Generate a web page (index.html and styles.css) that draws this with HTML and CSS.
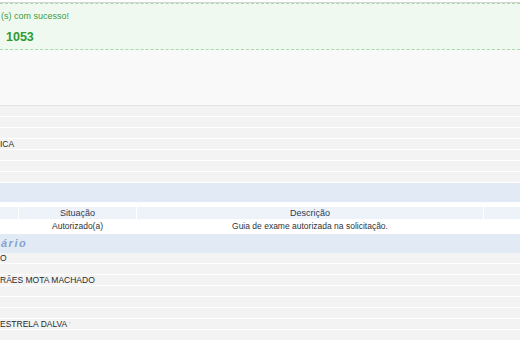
FILE: index.html
```html
<!DOCTYPE html>
<html>
<head>
<meta charset="utf-8">
<link rel="stylesheet" href="styles.css">
</head>
<body>
<div class="topbar"></div>
<div class="success">
  <div class="msg">(s) com sucesso!</div>
  <div class="num">1053</div>
</div>
<div class="blank"></div>
<div class="rows">
  <div class="row"></div>
  <div class="row"></div>
  <div class="row"></div>
  <div class="row">ICA</div>
  <div class="row"></div>
  <div class="row"></div>
  <div class="row"></div>
</div>
<div class="section"></div>
<div class="gap"></div>
<div class="thead">
  <div class="th"></div>
  <div class="th">Situação</div>
  <div class="th">Descrição</div>
  <div class="th"></div>
</div>
<div class="trow">
  <div class="td"></div>
  <div class="td">Autorizado(a)</div>
  <div class="td">Guia de exame autorizada na solicitação.</div>
  <div class="td"></div>
</div>
<div class="section title">ário</div>
<div class="rows">
  <div class="row">O</div>
  <div class="row"></div>
  <div class="row">RÃES MOTA MACHADO</div>
  <div class="row"></div>
  <div class="row"></div>
  <div class="row"></div>
  <div class="row">ESTRELA DALVA <span class="q">'</span></div>
  <div class="row"></div>
</div>
</body>
</html>
```

FILE: styles.css
```css
html, body {
  margin: 0;
  padding: 0;
  background: #fafafa;
  font-family: "Liberation Sans", Arial, sans-serif;
  overflow: hidden;
}
.topbar {
  height: 2px;
  background: #fdfdfd;
  border-bottom: 1px solid #d4d4d4;
}
.success {
  background: #eff9ef;
  border-top: 1px dashed #a9d9a9;
  border-bottom: 1px dashed #a9d9a9;
  height: 45px;
  padding-left: 1px;
}
.msg {
  margin-top: 6px;
  font-size: 9px;
  line-height: 12px;
  color: #3f9b3f;
}
.num {
  margin-top: 7px;
  padding-left: 5px;
  font-size: 12.5px;
  line-height: 16px;
  font-weight: bold;
  color: #2f9a2f;
}
.blank {
  height: 55px;
  background: #f9f9f9;
  border-bottom: 1px solid #e2e2e2;
}
.row {
  height: 10px;
  line-height: 10px;
  border-bottom: 1px solid #ffffff;
  background: #f3f3f3;
  font-size: 8.5px;
  color: #2a2a2a;
  white-space: nowrap;
}
.q {
  color: #999;
  font-size: 7px;
}
.section {
  height: 19px;
  background: #e2eaf6;
}
.gap {
  height: 5px;
  background: #ffffff;
}
.thead, .trow {
  display: grid;
  grid-template-columns: 18px 117px 346px 1fr;
  column-gap: 1px;
  background: #ffffff;
}
.thead {
  height: 12px;
}
.th {
  background: #eef3fa;
  font-size: 9px;
  line-height: 12px;
  text-align: center;
  color: #2c3a55;
}
.trow {
  height: 15px;
}
.td {
  background: #ffffff;
  font-size: 8.5px;
  line-height: 14px;
  text-align: center;
  color: #333333;
}
.title {
  font-size: 11px;
  line-height: 19px;
  font-style: italic;
  font-weight: bold;
  letter-spacing: 1.5px;
  color: #86a3cc;
  padding-left: 1px;
}
```
